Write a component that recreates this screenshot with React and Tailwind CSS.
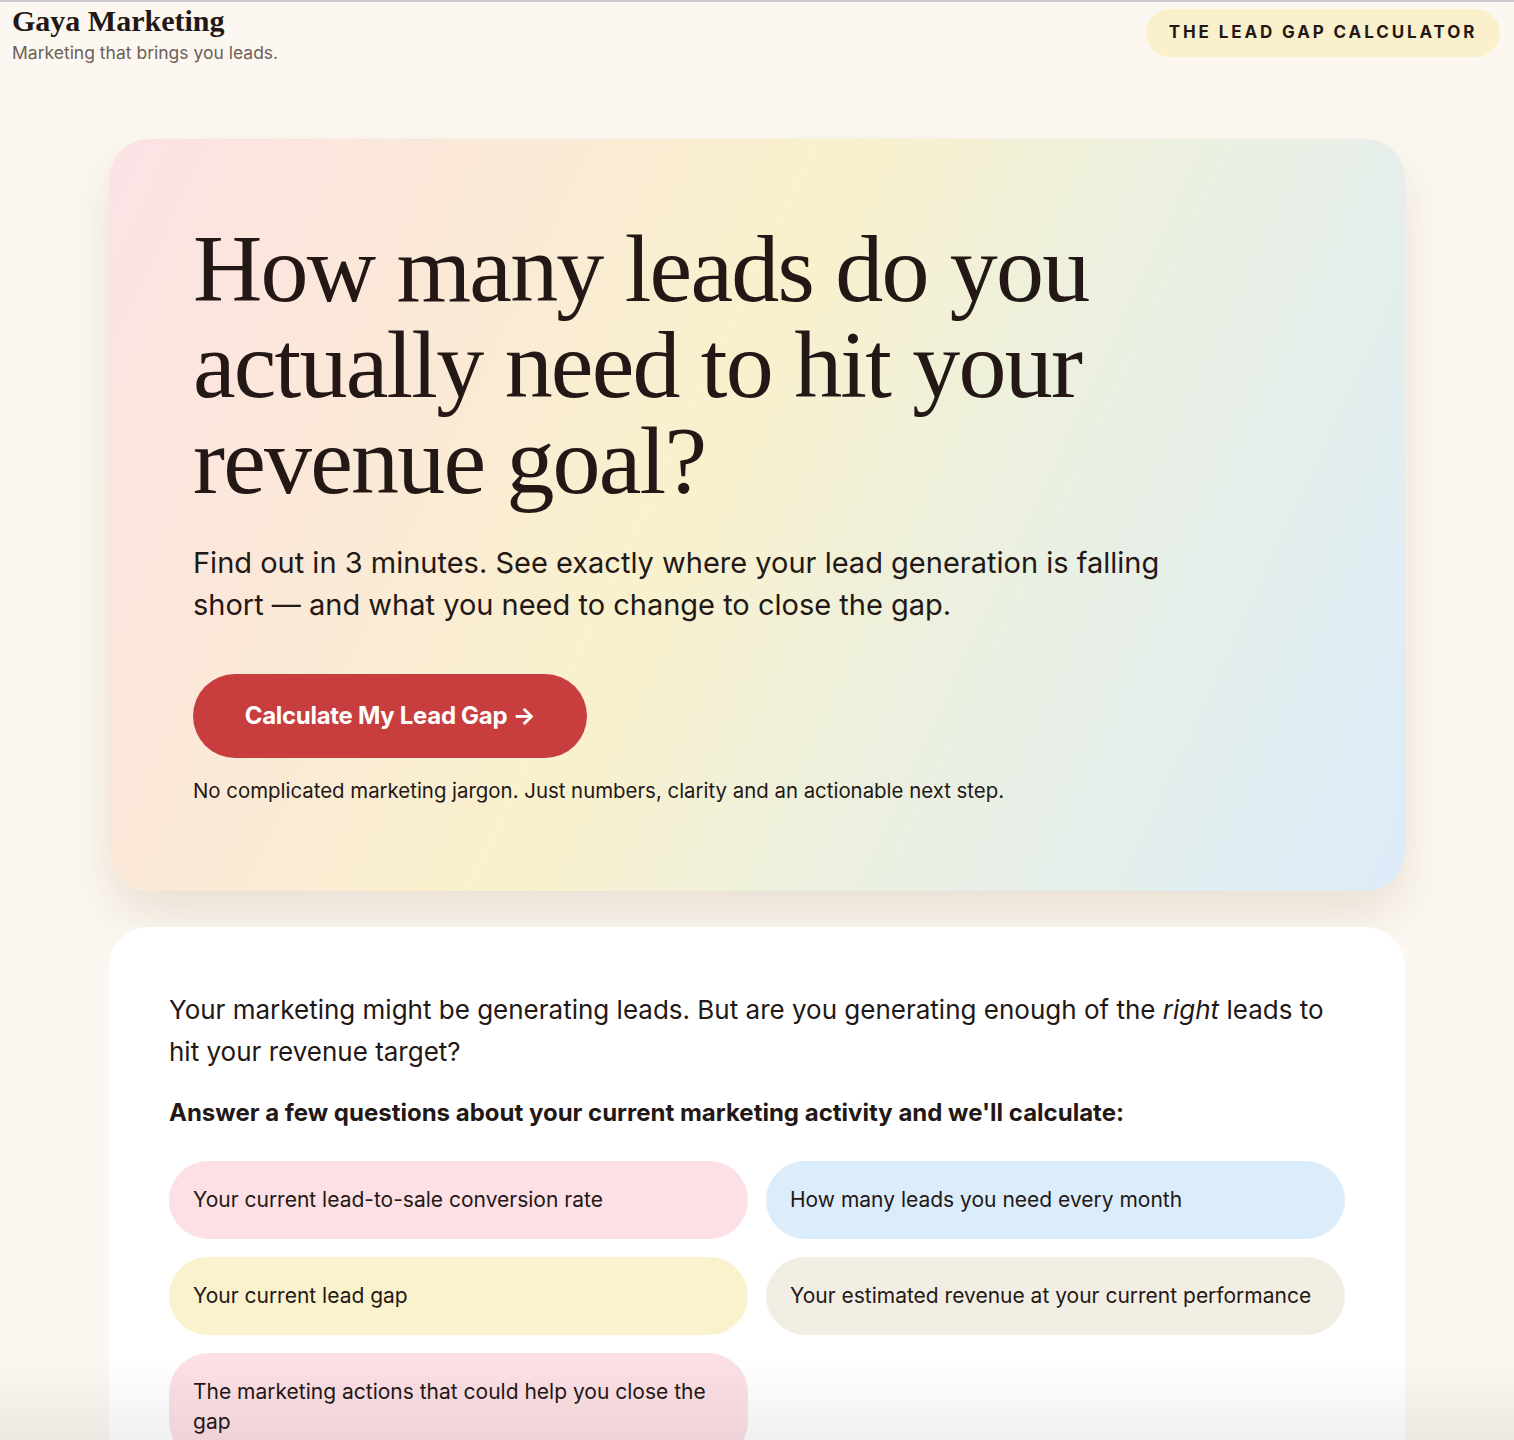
import React from 'react';

const serif = { fontFamily: '"Liberation Serif", "DejaVu Serif", serif' };

const outcomes = [
  { text: 'Your current lead-to-sale conversion rate', color: 'bg-[#fde0e5]' },
  { text: 'How many leads you need every month', color: 'bg-[#dbecfb]' },
  { text: 'Your current lead gap', color: 'bg-[#faf2cd]' },
  { text: 'Your estimated revenue at your current performance', color: 'bg-[#f3eee4]' },
  { text: 'The marketing actions that could help you close the gap', color: 'bg-[#fde0e5]' },
];

const App = () => {
  return (
    <div className="min-h-screen bg-[#fcf8f1] border-t-2 border-[#cbcbcb] text-[#231815] font-['Inter',sans-serif] relative overflow-hidden">
      {/* header */}
      <header className="flex justify-between items-start pl-3 pr-[14px] pt-[1px]">
        <div>
          <div className="text-[30px] font-bold leading-[36px]" style={serif}>Gaya Marketing</div>
          <div className="text-[17.5px] text-[#6d5f58] leading-[24px] mt-[2px]">Marketing that brings you leads.</div>
        </div>
        <div className="mt-[6px] bg-[#faf1cc] rounded-full h-[48px] w-[354px] flex items-center justify-center text-[17px] font-bold tracking-[0.17em]">
          THE LEAD GAP CALCULATOR
        </div>
      </header>

      <main className="w-[1296px] mx-auto mt-[74px] flex flex-col gap-[36px]">
        {/* hero */}
        <section className="rounded-[40px] bg-[linear-gradient(115deg,#fde2e6_0%,#fbe8d8_22%,#f9f1cd_45%,#eaf0e2_68%,#dcebf9_100%)] shadow-[0_24px_50px_rgba(120,80,40,0.14)] pl-[84px] pr-[80px] pt-[82px] pb-[86px]">
          <h1 className="text-[96px] leading-[96px] tracking-[-1.8px] font-normal max-w-[960px]" style={serif}>
            How many leads do you actually need to hit your revenue goal?
          </h1>
          <p className="mt-[33px] text-[29px] leading-[42px] max-w-[1000px]">
            Find out in 3 minutes. See exactly where your lead generation is falling short — and what you need to change to close the gap.
          </p>
          <button className="mt-[48px] h-[84px] w-[394px] rounded-full bg-[#c83d3d] text-white text-[24px] font-bold tracking-[-0.3px] flex items-center justify-center">
            Calculate My Lead Gap →
          </button>
          <p className="mt-[19px] text-[20.4px] leading-[28px]">
            No complicated marketing jargon. Just numbers, clarity and an actionable next step.
          </p>
        </section>

        {/* intro */}
        <section className="rounded-[40px] bg-white px-[60px] pt-[62px] pb-[60px]">
          <p className="text-[26px] leading-[42px]">
            Your marketing might be generating leads. But are you generating enough of the <em>right</em> leads to hit your revenue target?
          </p>
          <p className="mt-[25px] text-[24px] leading-[30px] font-bold">
            Answer a few questions about your current marketing activity and we'll calculate:
          </p>
          <div className="mt-[33px] grid grid-cols-2 gap-[18px]">
            {outcomes.map((o) => (
              <div key={o.text} className={`${o.color} rounded-[40px] min-h-[78px] px-[24px] py-[24px] flex items-center text-[21px] leading-[30px]`}>
                {o.text}
              </div>
            ))}
          </div>
        </section>
      </main>

      {/* bottom fade from the window edge */}
      <div className="pointer-events-none fixed left-0 right-0 bottom-0 h-[80px] bg-[linear-gradient(to_bottom,rgba(0,0,0,0),rgba(0,0,0,0.06))]" />
    </div>
  );
};

export default App;
